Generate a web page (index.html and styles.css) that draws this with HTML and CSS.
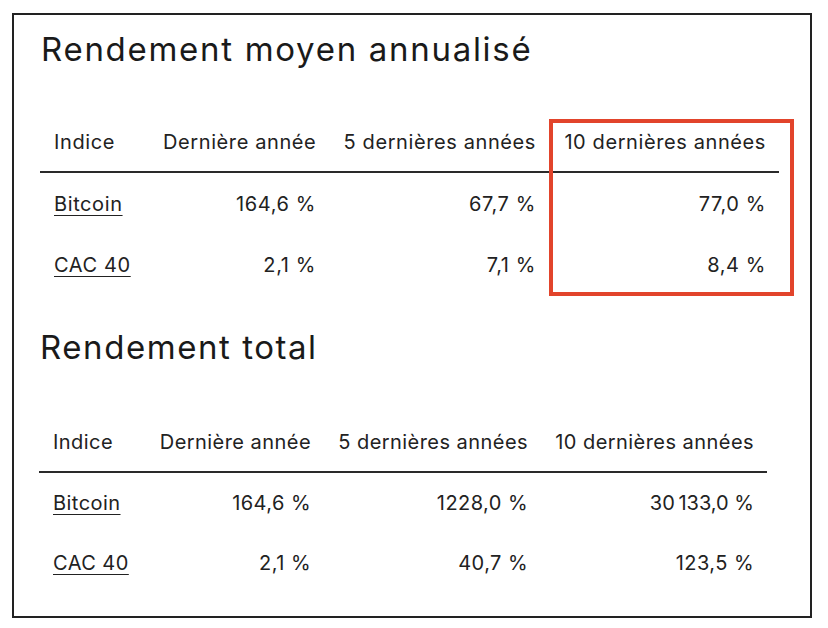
FILE: index.html
```html
<!DOCTYPE html>
<html lang="fr">
<head>
<meta charset="utf-8">
<title>Rendement</title>
<link rel="stylesheet" href="styles.css">
</head>
<body>
<div class="frame">
  <section class="block block-first">
    <h2 class="title">Rendement moyen annualisé</h2>
    <table class="perf">
      <thead>
        <tr><th class="name c1">Indice</th><th class="c2">Dernière année</th><th class="c3">5 dernières années</th><th class="c4">10 dernières années</th></tr>
      </thead>
      <tbody>
        <tr><td class="name"><a href="#">Bitcoin</a></td><td>164,6 %</td><td>67,7 %</td><td>77,0 %</td></tr>
        <tr><td class="name"><a href="#">CAC 40</a></td><td>2,1 %</td><td>7,1 %</td><td>8,4 %</td></tr>
      </tbody>
    </table>
    <div class="highlight"></div>
  </section>
  <section class="block block-second">
    <h2 class="title">Rendement total</h2>
    <table class="perf">
      <thead>
        <tr><th class="name c1">Indice</th><th class="c2">Dernière année</th><th class="c3">5 dernières années</th><th class="c4">10 dernières années</th></tr>
      </thead>
      <tbody>
        <tr><td class="name"><a href="#">Bitcoin</a></td><td>164,6 %</td><td>1228,0 %</td><td>30&#8239;133,0 %</td></tr>
        <tr><td class="name"><a href="#">CAC 40</a></td><td>2,1 %</td><td>40,7 %</td><td>123,5 %</td></tr>
      </tbody>
    </table>
  </section>
</div>
</body>
</html>
```
FILE: styles.css
```css
html, body {
  margin: 0;
  padding: 0;
  background: #ffffff;
}
body {
  font-family: Inter, "Noto Sans", sans-serif;
  color: #1c1c1c;
}
.frame {
  margin: 13px 0 0 12px;
  height: 601px;
  border: 2px solid #222222;
  padding: 0 0 0 26px;
  box-sizing: content-box;
  width: 770px;
}
.block {
  position: relative;
}
.block-first {
  padding-top: 14px;
}
.block-second {
  padding-top: 32px;
}
.title {
  margin: 0 0 43px 1px;
  font-size: 33px;
  line-height: 40px;
  font-weight: 400;
  letter-spacing: 1.7px;
  color: #1a1a1a;
}
.block-second .title {
  margin: 0 0 45px 0;
  letter-spacing: 1.55px;
}
.perf {
  border-collapse: collapse;
  table-layout: fixed;
  width: 738px;
  font-size: 20px;
  letter-spacing: 0.6px;
}
.perf th, .perf td {
  padding: 0 13px 0 14px;
  height: 61px;
  text-align: right;
  font-weight: 400;
  white-space: nowrap;
  color: #222222;
}
.perf th {
  border-bottom: 2px solid #2a2a2a;
  height: 59px;
}
.perf .c1 { width: 82px; }
.perf .c2 { width: 153px; }
.perf .c3 { width: 193px; }
.perf .c4 { width: 203px; }
.block-second .perf {
  margin-left: -1px;
  width: 728px;
  letter-spacing: 0.45px;
}
.block-second .perf .c1 { width: 79px; }
.block-second .perf .c2 { width: 152px; }
.block-second .perf .c3 { width: 190px; }
.block-second .perf .c4 { width: 199px; }
.block-second .perf td {
  height: 60px;
}
.perf .name {
  text-align: left;
}
.perf a {
  color: #222222;
  text-decoration: underline;
  text-decoration-thickness: 1px;
  text-underline-offset: 4px;
}
.highlight {
  position: absolute;
  left: 509px;
  top: 104px;
  width: 237px;
  height: 169px;
  border: 4px solid #e2442b;
}
```
